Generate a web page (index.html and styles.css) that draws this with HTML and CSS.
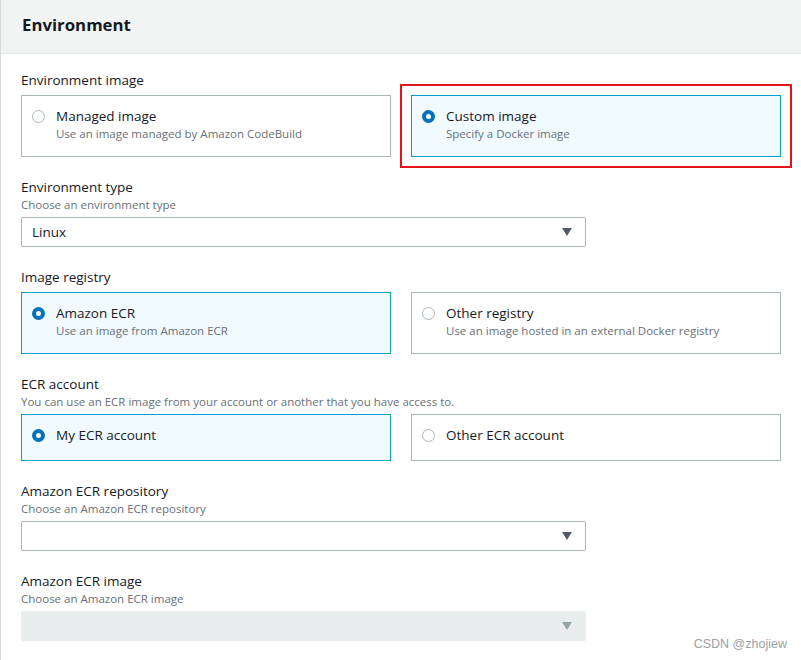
FILE: index.html
```html
<!DOCTYPE html>
<html lang="en">
<head>
<meta charset="utf-8">
<title>Environment</title>
<link rel="stylesheet" href="styles.css">
</head>
<body>
<section class="panel">
  <header class="panel-head"><h2 class="panel-title">Environment</h2></header>
  <div class="panel-body">
    <div class="field">
      <div class="label">Environment image</div>
      <div class="tiles">
        <div class="tile">
          <span class="radio"></span>
          <div class="tile-text"><div class="tile-title">Managed image</div><div class="tile-desc">Use an image managed by Amazon CodeBuild</div></div>
        </div>
        <div class="tile selected highlighted">
          <span class="radio on"></span>
          <div class="tile-text"><div class="tile-title">Custom image</div><div class="tile-desc">Specify a Docker image</div></div>
        </div>
      </div>
    </div>

    <div class="field">
      <div class="label">Environment type</div>
      <div class="desc">Choose an environment type</div>
      <div class="select"><span class="select-value">Linux</span><span class="caret"></span></div>
    </div>

    <div class="field">
      <div class="label">Image registry</div>
      <div class="tiles">
        <div class="tile selected">
          <span class="radio on"></span>
          <div class="tile-text"><div class="tile-title">Amazon ECR</div><div class="tile-desc">Use an image from Amazon ECR</div></div>
        </div>
        <div class="tile">
          <span class="radio"></span>
          <div class="tile-text"><div class="tile-title">Other registry</div><div class="tile-desc">Use an image hosted in an external Docker registry</div></div>
        </div>
      </div>
    </div>

    <div class="field">
      <div class="label">ECR account</div>
      <div class="desc">You can use an ECR image from your account or another that you have access to.</div>
      <div class="tiles">
        <div class="tile selected single">
          <span class="radio on"></span>
          <div class="tile-text"><div class="tile-title">My ECR account</div></div>
        </div>
        <div class="tile single">
          <span class="radio"></span>
          <div class="tile-text"><div class="tile-title">Other ECR account</div></div>
        </div>
      </div>
    </div>

    <div class="field">
      <div class="label">Amazon ECR repository</div>
      <div class="desc">Choose an Amazon ECR repository</div>
      <div class="select"><span class="select-value"></span><span class="caret"></span></div>
    </div>

    <div class="field">
      <div class="label">Amazon ECR image</div>
      <div class="desc">Choose an Amazon ECR image</div>
      <div class="select disabled"><span class="select-value"></span><span class="caret"></span></div>
    </div>
  </div>
  <div class="watermark">CSDN @zhojiew</div>
</section>
</body>
</html>
```
FILE: styles.css
```css
* { box-sizing: border-box; }
html, body { margin: 0; padding: 0; background: #ffffff; }
body {
  font-family: "Open Sans", "Liberation Sans", sans-serif;
  color: #16191f;
  width: 801px;
  height: 660px;
  overflow: hidden;
}
.panel {
  position: relative;
  height: 660px;
  border-left: 1px solid #d5dbdb;
}
.panel-head {
  height: 54px;
  background: #f2f3f3;
  border-bottom: 1px solid #e4e7e7;
  display: flex;
  align-items: center;
  padding-left: 21px;
}
.panel-title {
  margin: 0;
  font-size: 16.8px;
  font-weight: 700;
  line-height: 22px;
  padding-bottom: 4px;
}
.panel-body {
  padding: 16px 0 0 20px;
  display: flex;
  flex-direction: column;
  gap: 20px;
}
.field { display: flex; flex-direction: column; }
.label { font-size: 13.5px; line-height: 20px; }
.desc { font-size: 11.5px; line-height: 16px; color: #687078; }
.tiles {
  margin-top: 5px;
  display: grid;
  grid-template-columns: 370px 370px;
  column-gap: 20px;
}
.desc + .tiles { margin-top: 4px; }
.tile {
  border: 1px solid #aab7b8;
  background: #ffffff;
  padding: 10px 12px 14px 10px;
  display: flex;
  align-items: flex-start;
  gap: 11px;
  min-height: 62px;
}
.tile.single { min-height: 47px; }
.tile.selected { border-color: #00a1c9; background: #f1faff; }
.tile.highlighted { outline: 2px solid #e3151b; outline-offset: 9px; }
.radio {
  flex: none;
  width: 13px;
  height: 13px;
  margin-top: 4px;
  border-radius: 50%;
  border: 1px solid #aab7b8;
  background: #ffffff;
}
.radio.on { border: 4px solid #0073bb; background: #ffffff; }
.tile-title { font-size: 13.5px; line-height: 20px; }
.tile-desc { font-size: 11.5px; line-height: 16px; color: #687078; }
.select {
  margin-top: 4px;
  width: 565px;
  height: 30px;
  border: 1px solid #aab7b8;
  border-radius: 2px;
  background: #ffffff;
  display: flex;
  align-items: center;
  justify-content: space-between;
  padding: 0 13px 0 10px;
}
.select-value { font-size: 13.5px; }
.caret {
  width: 0; height: 0;
  border-left: 5px solid transparent;
  border-right: 5px solid transparent;
  border-top: 8px solid #545b64;
}
.select.disabled { background: #eaeded; border-color: #eaeded; }
.select.disabled .caret { border-top-color: #95a5a6; }
.watermark {
  position: absolute;
  right: 14px;
  bottom: 9px;
  font-family: "Liberation Sans", Arial, sans-serif;
  font-size: 12.5px;
  color: #a0a0a0;
}
```
